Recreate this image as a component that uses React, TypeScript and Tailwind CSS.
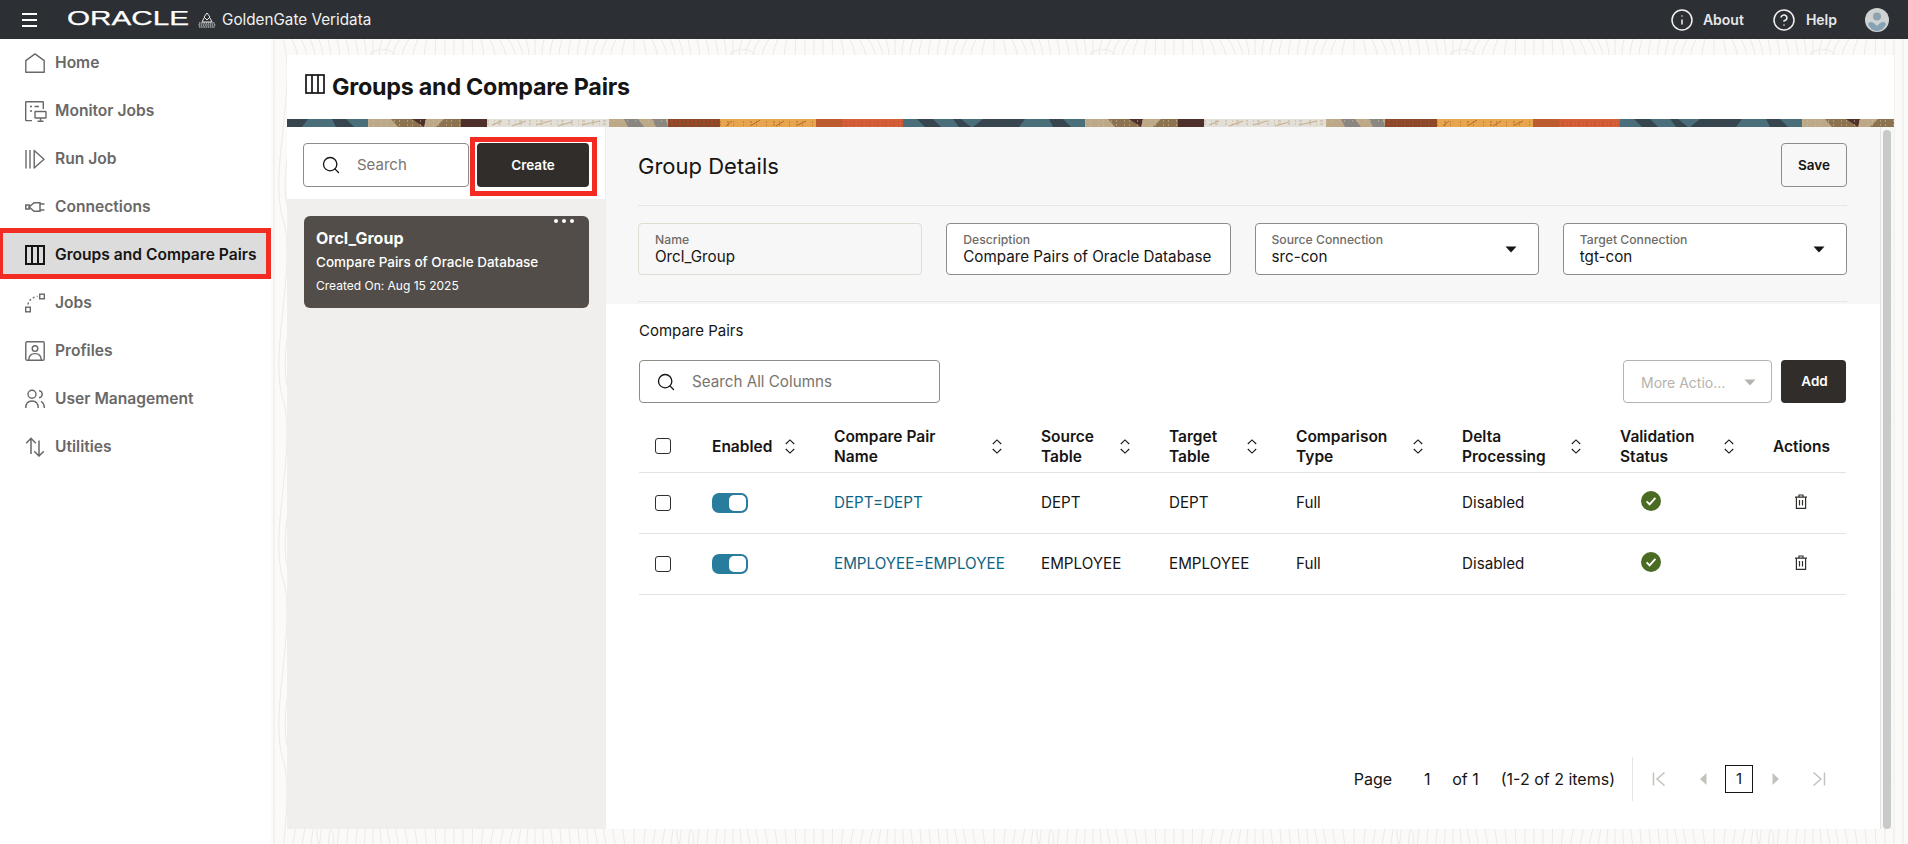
import React from 'react';
import { Search, Info, CircleHelp } from 'lucide-react';

const RedBox = ({ className }: { className: string }) => (
  <div className={`absolute border-[#f22c22] pointer-events-none ${className}`} />
);

const HomeIcon = () => (
  <svg width="20" height="20" viewBox="0 0 20 20" fill="none" stroke="currentColor" strokeWidth="1.4">
    <path d="M0.8 7.6 L10 0.9 L19.2 7.6 V19.2 H0.8 Z" strokeLinejoin="round" />
  </svg>
);
const MonitorIcon = () => (
  <svg width="22" height="21" viewBox="0 0 22 21" fill="none" stroke="currentColor" strokeWidth="1.4">
    <path d="M7 19.6 H1.2 a0.5 0.5 0 0 1 -0.5 -0.5 V1.2 a0.5 0.5 0 0 1 0.5 -0.5 H17.8 a0.5 0.5 0 0 1 0.5 0.5 V8" />
    <path d="M5 5.5 H7 M9.5 5.5 H14 M5 10 H7" />
    <rect x="10" y="10.5" width="11" height="6.5" rx="0.5" />
    <path d="M15.5 17 V20 M12.5 20.2 H18.5" />
  </svg>
);
const RunIcon = () => (
  <svg width="20" height="20" viewBox="0 0 20 20" fill="none" stroke="currentColor" strokeWidth="1.4">
    <path d="M1 1 V19.5 M5 1 V19.5 M9.2 1.5 V19 L19 10.2 Z" strokeLinejoin="round" />
  </svg>
);
const PlugIcon = () => (
  <svg width="20" height="20" viewBox="0 0 20 20" fill="none" stroke="currentColor" strokeWidth="1.5">
    <rect x="0.8" y="8" width="3.4" height="4" />
    <path d="M4.2 10 L9 5.8 H15 V14.2 H9 Z" />
    <path d="M15 7 H19.5 M15 13 H19.5" />
  </svg>
);
const ColumnsIcon = ({ size = 20, width = 2 }: { size?: number; width?: number }) => (
  <svg width={size} height={size} viewBox="0 0 20 20" fill="none" stroke="currentColor" strokeWidth={width}>
    <rect x="1" y="1" width="18" height="18" />
    <path d="M7 1 V19 M13 1 V19" />
  </svg>
);
const JobsIcon = () => (
  <svg width="20" height="20" viewBox="0 0 20 20" fill="none" stroke="currentColor" strokeWidth="1.4">
    <rect x="0.7" y="14.2" width="4.6" height="4.6" />
    <rect x="14.7" y="1.2" width="4.6" height="4.6" />
    <path d="M3 11.5 C3.4 8 6.5 4.5 12.5 3.4" strokeDasharray="2 2.2" />
  </svg>
);
const ProfileIcon = () => (
  <svg width="20" height="20" viewBox="0 0 20 20" fill="none" stroke="currentColor" strokeWidth="1.4">
    <rect x="0.8" y="0.8" width="18.4" height="18.4" rx="1.2" />
    <circle cx="10" cy="7.6" r="2.8" />
    <path d="M3.8 19 C3.8 14.4 6.4 12.6 10 12.6 C13.6 12.6 16.2 14.4 16.2 19" />
  </svg>
);
const UsersIcon = () => (
  <svg width="20" height="20" viewBox="0 0 20 20" fill="none" stroke="currentColor" strokeWidth="1.4">
    <circle cx="7" cy="5.2" r="4" />
    <path d="M0.8 19 C0.8 14.6 3.2 12 7 12 C10.8 12 13.2 14.6 13.2 19" />
    <path d="M14 1.6 C16 1.9 17.2 3.3 17.2 5.2 C17.2 7 16 8.4 14 8.8" />
    <path d="M16 12.4 C18 13.4 19.3 15.6 19.3 19" />
  </svg>
);
const UtilitiesIcon = () => (
  <svg width="20" height="20" viewBox="0 0 20 20" fill="none" stroke="currentColor" strokeWidth="1.5">
    <path d="M6 17 V1.5 M1.2 6.2 L6 1.3 L10.8 6.2" />
    <path d="M14 3.5 V19 M9.2 14.2 L14 19 L18.8 14.2" />
  </svg>
);

const SortIcon = () => (
  <span className="w-6 shrink-0 flex justify-center">
    <svg width="10" height="15" viewBox="0 0 10 15" fill="none" stroke="#161513" strokeWidth="1.1">
      <path d="M0.8 5 L5 0.9 L9.2 5" />
      <path d="M0.8 10 L5 14.1 L9.2 10" />
    </svg>
  </span>
);

const CheckCircle = () => (
  <svg width="20" height="20" viewBox="0 0 20 20" className="-mt-1">
    <circle cx="10" cy="10" r="10" fill="#4a6b22" />
    <path d="M5.6 10.4 L8.6 13.4 L14.4 6.8" fill="none" stroke="#fff" strokeWidth="1.9" />
  </svg>
);

const TrashIcon = () => (
  <svg width="14" height="15" viewBox="0 0 14 15" fill="none" stroke="#312d2a" strokeWidth="1.2" className="-mt-[3px] mx-auto -translate-x-px">
    <path d="M1 3.2 H13 M5 3 V1 H9 V3" />
    <path d="M2.4 3.2 V14.3 H11.6 V3.2" />
    <path d="M5.5 6 V11.5 M8.5 6 V11.5" />
  </svg>
);

const Caret = ({ className }: { className: string }) => (
  <svg width="12" height="7" viewBox="0 0 12 7" className={className}>
    <path d="M0.5 0.5 H11.5 L6 6.5 Z" fill="currentColor" />
  </svg>
);

const Toggle = () => (
  <div className="w-9 h-5 rounded-[7px] bg-[#287c9e] flex justify-end items-center pr-[2px]">
    <div className="w-[17px] h-4 rounded-[5px] bg-white" />
  </div>
);

const Checkbox = () => <div className="w-4 h-4 rounded-[3px] border-[1.5px] border-[#312d2a] bg-white" />;

const navItems = [
  { name: 'Home', icon: <HomeIcon /> },
  { name: 'Monitor Jobs', icon: <MonitorIcon /> },
  { name: 'Run Job', icon: <RunIcon /> },
  { name: 'Connections', icon: <PlugIcon /> },
  { name: 'Groups and Compare Pairs', icon: <ColumnsIcon />, active: true },
  { name: 'Jobs', icon: <JobsIcon /> },
  { name: 'Profiles', icon: <ProfileIcon /> },
  { name: 'User Management', icon: <UsersIcon /> },
  { name: 'Utilities', icon: <UtilitiesIcon /> },
];

const headers = [
  { label: ['Enabled'] },
  { label: ['Compare Pair', 'Name'] },
  { label: ['Source', 'Table'] },
  { label: ['Target', 'Table'] },
  { label: ['Comparison', 'Type'] },
  { label: ['Delta', 'Processing'] },
  { label: ['Validation', 'Status'] },
];

const rows = [
  { name: 'DEPT=DEPT', source: 'DEPT', target: 'DEPT' },
  { name: 'EMPLOYEE=EMPLOYEE', source: 'EMPLOYEE', target: 'EMPLOYEE' },
];

// contour lines for the page backdrop, tile is 360x180 so the lines have to close up
const contours = Array.from({ length: 40 }, (_, i) => {
  const x = i * 9 + 3;
  const a = 24 * Math.sin((i / 40) * Math.PI * 4) + 10 * Math.sin((i / 40) * Math.PI * 10);
  return `M${x} 0 C${(x + a).toFixed(1)} 45 ${(x - a).toFixed(1)} 135 ${x} 180`;
});

const TopoBackground = () => (
  <svg className="absolute inset-0 w-full h-full" xmlns="http://www.w3.org/2000/svg">
    <defs>
      <pattern id="topo" width="360" height="180" patternUnits="userSpaceOnUse">
        <g fill="none" stroke="#ebe9e6" strokeWidth="1">
          {contours.map((d) => (
            <path key={d} d={d} />
          ))}
          <path d="M100 14 C112 6 128 12 126 24 C124 36 104 34 100 14 Z" />
          <path d="M198 120 C208 110 222 118 218 134 C214 148 196 140 198 120 Z" />
          <path d="M46 70 C54 62 66 70 62 86 C58 98 44 90 46 70 Z" />
        </g>
      </pattern>
    </defs>
    <rect width="100%" height="100%" fill="#fbfaf8" />
    <rect width="100%" height="100%" fill="url(#topo)" />
  </svg>
);

const Banner = () => (
  <svg className="block w-full h-2 shrink-0" xmlns="http://www.w3.org/2000/svg">
    <defs>
      <pattern id="ban" x="-101" width="717" height="8" patternUnits="userSpaceOnUse">
        <rect x="0" width="182" height="8" fill="#4a6f7b" />
        <g fill="#36454e">
          <path d="M14 0 H30 L38 8 H22 Z" />
          <path d="M50 0 H58 L68 8 H56 Z" />
          <path d="M80 0 H122 L116 8 H70 Z" />
          <path d="M146 0 H160 L168 8 H150 Z" />
        </g>
        <rect x="182" width="56" height="8" fill="#bda888" />
        <path d="M205 0 H240 L262 8 H212 Z" fill="#8c7350" />
        <rect x="238" width="37" height="8" fill="#8c7350" />
        <path d="M238 0 H258 L250 8 H238 Z" fill="#bda888" />
        <path d="M226 0 H240 L238 8 Z" fill="#4e2f2a" />
        <rect x="275" width="26" height="8" fill="#4e2f2a" />
        <rect x="301" width="122" height="8" fill="#e2dfd8" />
        <g stroke="#c7b08e" strokeWidth="1.2" fill="none">
          <path d="M306 6 L316 2 M326 7 L340 2 M350 6 L364 2 M372 7 L386 3 M396 6 L414 2" />
          <path d="M301 2 H423 M301 5 H423" strokeDasharray="2 5 1 3 3 7" />
        </g>
        <rect x="423" width="59" height="8" fill="#bda888" />
        <path d="M438 0 H452 L458 8 H442 Z M466 0 H480 L482 8 H470 Z" fill="#8a8681" />
        <rect x="482" width="52" height="8" fill="#8a4a2a" />
        <rect x="534" width="122" height="8" fill="#e6a64e" />
        <g stroke="#b9622e" strokeWidth="1" fill="none">
          <path d="M540 7 L546 2 M566 6 L574 1 M590 7 L598 2 M612 6 L620 2 M640 7 L648 2" />
          <path d="M534 3 H656 M534 6 H656" strokeDasharray="1 6 2 4 1 9" />
        </g>
        <rect x="630" width="26" height="8" fill="#bc5a30" />
        <rect x="656" width="61" height="8" fill="#d4603a" />
        <path d="M482 2 H534 M482 5 H534 M656 3 H717 M656 6 H717" stroke="#c2452c" strokeWidth="1" strokeDasharray="1 2 2 3" fill="none" />
        <path d="M182 2 H275 M182 6 H275 M423 2 H482" stroke="#d0bfa4" strokeWidth="1" strokeDasharray="1 4 1 7" fill="none" />
      </pattern>
    </defs>
    <rect width="100%" height="8" fill="url(#ban)" />
  </svg>
);

const Field = ({ label, value, select, readOnly }: { label: string; value: string; select?: boolean; readOnly?: boolean }) => (
  <div
    className={`h-[52px] rounded-[4px] border px-4 flex items-center justify-between ${
      readOnly ? 'border-[#dedcd3] bg-[#f7f7f7]' : 'border-[#8f8c87] bg-white'
    }`}
  >
    <div className="min-w-0 pt-[1px]">
      <div className="text-[12.2px] leading-[15px] font-medium text-[#6f6c68]">{label}</div>
      <div className="text-[15.2px] leading-[20px] text-[#161513] whitespace-nowrap">{value}</div>
    </div>
    {select && <Caret className="text-[#161513] mr-[5px] shrink-0" />}
  </div>
);

export default function App() {
  return (
    <div className="h-screen flex flex-col overflow-hidden bg-white text-[#161513] font-['Inter','Noto_Sans',sans-serif]">
      {/* Top bar */}
      <header className="h-[39px] shrink-0 bg-[#2c2f33] text-white flex items-center pl-[22px] pr-[19px]">
        <div className="w-[15px] flex flex-col gap-[4px]">
          <div className="h-[2px] bg-white" />
          <div className="h-[2px] bg-white" />
          <div className="h-[2px] bg-white" />
        </div>
        <svg width="126" height="24" viewBox="0 0 126 24" className="ml-[30px]">
          <text x="0" y="16.5" fontFamily="Liberation Sans" fontSize="20" fill="#fff" stroke="#fff" strokeWidth="0.25" textLength="122" lengthAdjust="spacingAndGlyphs">
            ORACLE
          </text>
        </svg>
        <svg width="18" height="16" viewBox="0 0 18 16" fill="none" stroke="#e8e8e8" strokeWidth="1" className="ml-[5px]">
          <path d="M9 1 L6 5 L9 8 L12 5 Z M4 10 L6 6 M14 10 L12 6 M4 10 H14" />
          <path d="M1 11 H17 M0.5 13 H17.5 M1 15 H17" strokeDasharray="1.5 0.7" />
        </svg>
        <span className="ml-[6px] text-[15.25px] leading-none text-[#f1f1f1]">GoldenGate Veridata</span>
        <div className="ml-auto flex items-center">
          <Info size={24} strokeWidth={1.5} className="text-[#f1f1f1]" />
          <span className="ml-[9px] text-[14px] font-semibold text-[#e6e6e6]">About</span>
          <CircleHelp size={24} strokeWidth={1.5} className="ml-[28px] text-[#f1f1f1]" />
          <span className="ml-[10px] text-[14px] font-semibold text-[#e6e6e6]">Help</span>
          <svg width="24" height="24" viewBox="0 0 24 24" className="ml-[28px]">
            <circle cx="12" cy="12" r="12" fill="#cfd2d2" />
            <circle cx="12" cy="8.5" r="4" fill="#8fa1ac" />
            <path d="M3 16 C5 13 7.5 14 10 16 L12 18 L14 16 C16.5 14 19 13 21 16 C19 21 15 23 12 23 C9 23 5 21 3 16 Z" fill="#86a3b5" />
          </svg>
        </div>
      </header>

      <div className="flex-1 min-h-0 flex">
        {/* Sidebar */}
        <aside className="w-[271px] shrink-0 bg-white">
          {navItems.map((item) => (
            <div
              key={item.name}
              className={`relative h-12 flex items-center pl-[25px] text-[15.6px] font-semibold whitespace-nowrap ${
                item.active ? 'bg-[#dcdcdc] text-[#161513]' : 'text-[#696867]'
              }`}
            >
              <span className="w-[30px] shrink-0 flex items-center">{item.icon}</span>
              {item.name}
              {item.active && <RedBox className="-top-[3px] bottom-0 left-0 right-0 border-y-[5px] border-l-[3px] border-r-[5px]" />}
            </div>
          ))}
        </aside>

        {/* Main */}
        <main className="relative flex-1 min-w-0 pl-4 pt-4 pr-[14px] pb-[15px]">
          <TopoBackground />
          <div className="relative h-full flex flex-col bg-white">
            <div className="h-16 shrink-0 flex items-center pl-[18px]">
              <span className="-mt-[6px]">
                <ColumnsIcon size={20} width={1.7} />
              </span>
              <h1 className="ml-[7px] text-[23.3px] font-bold tracking-[-0.01em] leading-none">Groups and Compare Pairs</h1>
            </div>
            <Banner />

            <div className="flex-1 min-h-0 flex">
              {/* Group list */}
              <div className="w-[319px] shrink-0 flex flex-col border-r border-[#eeeeec]">
                <div className="h-[72px] shrink-0 bg-white flex items-start gap-2 pt-4 px-4">
                  <div className="w-[167px] h-11 rounded-[4px] border border-[#8f8c87] flex items-center pl-[17px] text-[#161513]">
                    <Search size={20} strokeWidth={1.6} />
                    <span className="ml-[16px] text-[15px] text-[#78756f]">Search</span>
                  </div>
                  <div className="relative h-11">
                    <button className="w-28 h-11 rounded-[4px] bg-[#312d2a] text-white text-[13.5px] font-semibold">Create</button>
                    <RedBox className="-top-[6px] -bottom-[9px] -left-[7px] -right-2 border-[5px]" />
                  </div>
                </div>
                <div className="flex-1 bg-[#f0efed] px-[17px] pt-[17px]">
                  <div className="relative w-[285px] h-[92px] rounded-[6px] bg-[#524d48] text-white pl-[12px] pt-[12px]">
                    <div className="absolute top-[3px] right-[15px] flex gap-[4px]">
                      <div className="w-1 h-1 rounded-full bg-white" />
                      <div className="w-1 h-1 rounded-full bg-white" />
                      <div className="w-1 h-1 rounded-full bg-white" />
                    </div>
                    <div className="text-[16px] leading-5 font-bold">Orcl_Group</div>
                    <div className="mt-[4px] text-[13.5px] leading-5 font-medium">Compare Pairs of Oracle Database</div>
                    <div className="mt-[4px] text-[12px] leading-5">Created On: Aug 15 2025</div>
                  </div>
                </div>
              </div>

              {/* Details */}
              <div className="flex-1 min-w-0 flex flex-col">
                <div className="h-[177px] shrink-0 bg-[#f7f7f7] px-8 pt-4 pr-[33px]">
                  <div className="h-[63px] border-b border-[#e6e6e4] flex justify-between items-start">
                    <h2 className="mt-[9px] text-[22px] leading-7 font-normal">Group Details</h2>
                    <button className="w-[66px] h-11 rounded-[4px] border border-[#8f8c87] bg-[#f7f7f7] text-[13.5px] font-semibold">Save</button>
                  </div>
                  <div className="mt-[17px] grid grid-cols-4 gap-6">
                    <Field label="Name" value="Orcl_Group" readOnly />
                    <Field label="Description" value="Compare Pairs of Oracle Database" />
                    <Field label="Source Connection" value="src-con" select />
                    <Field label="Target Connection" value="tgt-con" select />
                  </div>
                  <div className="mt-[26px] border-b border-[#e6e6e4]" />
                </div>

                <div className="flex-1 min-h-0 flex flex-col bg-white pl-[33px] pr-[34px] pt-[17px] pb-7">
                  <div className="text-[15px] leading-5">Compare Pairs</div>
                  <div className="mt-[19px] flex items-center">
                    <div className="w-[301px] h-[43px] rounded-[4px] border border-[#8f8c87] flex items-center pl-4">
                      <Search size={20} strokeWidth={1.6} />
                      <span className="ml-[16px] pt-px text-[15.2px] text-[#78756f]">Search All Columns</span>
                    </div>
                    <div className="ml-auto w-[149px] h-[43px] rounded-[4px] border border-[#b5b3ae] flex items-center pl-[17px] pt-px text-[14px] text-[#b5b3ad]">
                      More Actio...
                      <Caret className="ml-auto mr-[15px] text-[#b5b3ad]" />
                    </div>
                    <button className="ml-[9px] w-[65px] h-[43px] pl-[2px] rounded-[4px] bg-[#312d2a] text-white text-[13.5px] font-semibold">Add</button>
                  </div>

                  <table className="mt-[17px] w-full table-fixed text-[15.2px]">
                    <colgroup>
                      <col className="w-[57px]" />
                      <col className="w-[122px]" />
                      <col className="w-[207px]" />
                      <col className="w-[128px]" />
                      <col className="w-[127px]" />
                      <col className="w-[166px]" />
                      <col className="w-[158px]" />
                      <col className="w-[153px]" />
                      <col className="w-[89px]" />
                    </colgroup>
                    <thead>
                      <tr className="h-[52px] border-b border-[#e4e3e0]">
                        <th className="px-4">
                          <Checkbox />
                        </th>
                        {headers.map((h) => (
                          <th key={h.label[0]} className="pl-4 pt-[2px] text-[15.5px] font-semibold text-left leading-5">
                            <div className="flex items-center justify-between pr-4">
                              <span>
                                {h.label.map((l) => (
                                  <div key={l}>{l}</div>
                                ))}
                              </span>
                              <SortIcon />
                            </div>
                          </th>
                        ))}
                        <th className="pl-4 pt-[2px] text-[15.5px] font-semibold text-left">Actions</th>
                      </tr>
                    </thead>
                    <tbody>
                      {rows.map((r) => (
                        <tr key={r.name} className="h-[61px] border-b border-[#e4e3e0]">
                          <td className="px-4">
                            <Checkbox />
                          </td>
                          <td className="pl-4">
                            <Toggle />
                          </td>
                          <td className="pl-4 pt-px text-[#0d6484] whitespace-nowrap">{r.name}</td>
                          <td className="pl-4 pt-px">{r.source}</td>
                          <td className="pl-4 pt-px">{r.target}</td>
                          <td className="pl-4 pt-px">Full</td>
                          <td className="pl-4 pt-px">Disabled</td>
                          <td className="pl-[37px]">
                            <CheckCircle />
                          </td>
                          <td>
                            <TrashIcon />
                          </td>
                        </tr>
                      ))}
                    </tbody>
                  </table>

                  {/* Pagination */}
                  <div className="mt-auto h-11 flex items-center justify-end text-[16px] mr-[5px]">
                    <span>Page</span>
                    <span className="ml-[10px] w-[50px] text-center">1</span>
                    <span>of 1</span>
                    <span className="ml-[22px]">(1-2 of 2 items)</span>
                    <div className="ml-[17px] w-px h-11 bg-[#e4e3e0]" />
                    <div className="ml-1 flex items-center text-[#c4c2bd]">
                      <span className="w-11 flex justify-center">
                        <svg width="14" height="14" viewBox="0 0 14 14" fill="none" stroke="currentColor" strokeWidth="1.5">
                          <path d="M1.5 0.5 V13.5 M12.5 0.5 L5 7 L12.5 13.5" />
                        </svg>
                      </span>
                      <span className="w-11 flex justify-center">
                        <svg width="7" height="12" viewBox="0 0 7 12">
                          <path d="M6.5 0 V12 L0 6 Z" fill="currentColor" />
                        </svg>
                      </span>
                      <span className="w-7 h-7 border border-[#161513] flex items-center justify-center text-[15px] text-[#161513]">1</span>
                      <span className="w-11 flex justify-center">
                        <svg width="7" height="12" viewBox="0 0 7 12">
                          <path d="M0.5 0 V12 L7 6 Z" fill="currentColor" />
                        </svg>
                      </span>
                      <span className="w-11 flex justify-center">
                        <svg width="14" height="14" viewBox="0 0 14 14" fill="none" stroke="currentColor" strokeWidth="1.5">
                          <path d="M12.5 0.5 V13.5 M1.5 0.5 L9 7 L1.5 13.5" />
                        </svg>
                      </span>
                    </div>
                  </div>
                </div>
              </div>

              {/* Scrollbar */}
              <div className="w-[14px] shrink-0 border-l border-[#e4e3e0] bg-[#f7f7f7] pl-[2px] pt-[3px]">
                <div className="w-2 h-full rounded-full bg-[#c7cac8]" />
              </div>
            </div>
          </div>
        </main>
      </div>
    </div>
  );
}
